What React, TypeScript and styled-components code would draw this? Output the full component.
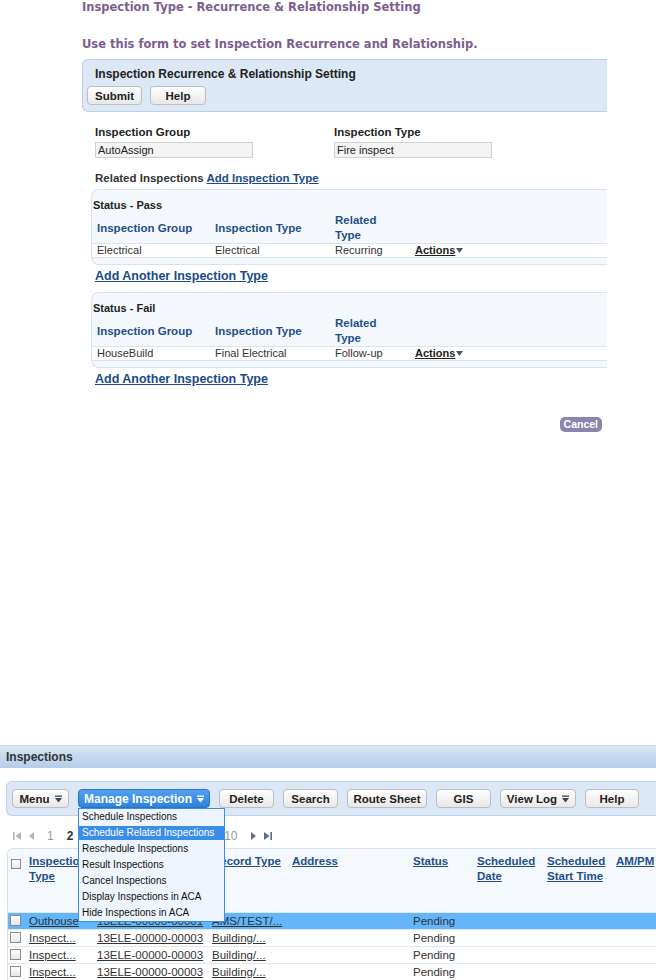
import styled, { createGlobalStyle } from 'styled-components'

const purple = '#7c5e8e'
const linkBlue = '#1b4a86'
const headBlue = '#1f4f88'

interface Relation {
  group: string
  type: string
  related: string
}

interface Inspection {
  type: string
  record: string
  recordType: string
  status: string
  selected?: boolean
}

const passRelations: Relation[] = [{ group: 'Electrical', type: 'Electrical', related: 'Recurring' }]
const failRelations: Relation[] = [{ group: 'HouseBuild', type: 'Final Electrical', related: 'Follow-up' }]

const toolbarButtons = [
  { label: 'Menu', width: 57, drop: true },
  { label: 'Manage Inspection', width: 132, drop: true, primary: true },
  { label: 'Delete', width: 55 },
  { label: 'Search', width: 55 },
  { label: 'Route Sheet', width: 80 },
  { label: 'GIS', width: 55 },
  { label: 'View Log', width: 76, drop: true },
  { label: 'Help', width: 54 }
]

const manageItems = [
  'Schedule Inspections',
  'Schedule Related Inspections',
  'Reschedule Inspections',
  'Result Inspections',
  'Cancel Inspections',
  'Display Inspections in ACA',
  'Hide Inspections in ACA'
]

const columns = [
  { label: '', width: 20 },
  { label: 'Inspection Type', width: 68 },
  { label: 'Record ID', width: 115 },
  { label: 'Record Type', width: 80 },
  { label: 'Address', width: 121 },
  { label: 'Status', width: 64 },
  { label: 'Scheduled Date', width: 70 },
  { label: 'Scheduled Start Time', width: 69 },
  { label: 'AM/PM' }
]

const inspections: Inspection[] = [
  { type: 'Outhouse', record: '13ELE-00000-00001', recordType: 'AMS/TEST/...', status: 'Pending', selected: true },
  { type: 'Inspect...', record: '13ELE-00000-00003', recordType: 'Building/...', status: 'Pending' },
  { type: 'Inspect...', record: '13ELE-00000-00003', recordType: 'Building/...', status: 'Pending' },
  { type: 'Inspect...', record: '13ELE-00000-00003', recordType: 'Building/...', status: 'Pending' }
]

const GlobalStyle = createGlobalStyle`
  body {
    margin: 0;
    background: #fff;
    color: #222;
    font-family: 'Liberation Sans', Arial, sans-serif;
  }
`

const DropIcon = ({ color = '#444' }: { color?: string }) => (
  <svg width="7" height="8" viewBox="0 0 7 8">
    <rect x="0" y="0.5" width="7" height="1.3" fill={color} />
    <polygon points="0,3 7,3 3.5,7.5" fill={color} />
  </svg>
)

const PagerArrow = ({ dir, end, color }: { dir: 'left' | 'right'; end?: boolean; color: string }) => (
  <svg width={end ? 8 : 5} height="8" viewBox={end ? '0 0 8 8' : '0 0 5 8'}>
    {dir === 'left' && end && (
      <>
        <rect x="0" y="0" width="1.6" height="8" fill={color} />
        <polygon points="8,0 8,8 2.5,4" fill={color} />
      </>
    )}
    {dir === 'left' && !end && <polygon points="5,0 5,8 0,4" fill={color} />}
    {dir === 'right' && !end && <polygon points="0,0 0,8 5,4" fill={color} />}
    {dir === 'right' && end && (
      <>
        <polygon points="0,0 0,8 5.5,4" fill={color} />
        <rect x="6.4" y="0" width="1.6" height="8" fill={color} />
      </>
    )}
  </svg>
)

const StatusSection = ({ status, rows }: { status: string; rows: Relation[] }) => (
  <StatusBox>
    <StatusTitle>Status - {status}</StatusTitle>
    <RelTable>
      <colgroup>
        <col style={{ width: 118 }} />
        <col style={{ width: 120 }} />
        <col style={{ width: 80 }} />
        <col />
      </colgroup>
      <thead>
        <tr>
          <RelHead>Inspection Group</RelHead>
          <RelHead>Inspection Type</RelHead>
          <RelHead>
            Related
            <br />
            Type
          </RelHead>
          <RelHead />
        </tr>
      </thead>
      <tbody>
        {rows.map((row) => (
          <tr key={row.group}>
            <RelCell>{row.group}</RelCell>
            <RelCell>{row.type}</RelCell>
            <RelCell>{row.related}</RelCell>
            <RelCell>
              <ActionsLink>
                <span>Actions</span>
                <svg width="7" height="5" viewBox="0 0 7 5">
                  <polygon points="0,0 7,0 3.5,5" fill="#555" />
                </svg>
              </ActionsLink>
            </RelCell>
          </tr>
        ))}
      </tbody>
    </RelTable>
  </StatusBox>
)

const App = () => (
  <>
    <GlobalStyle />
    <FormArea>
      <PageTitle>Inspection Type - Recurrence &amp; Relationship Setting</PageTitle>
      <Intro>Use this form to set Inspection Recurrence and Relationship.</Intro>
      <SettingPanel>
        <PanelTitle>Inspection Recurrence &amp; Relationship Setting</PanelTitle>
        <ButtonRow>
          <GrayButton $w={55}>Submit</GrayButton>
          <GrayButton $w={56}>Help</GrayButton>
        </ButtonRow>
      </SettingPanel>
      <FieldGrid>
        <Field>
          <FieldLabel>Inspection Group</FieldLabel>
          <FieldInput readOnly value="AutoAssign" />
        </Field>
        <Field>
          <FieldLabel>Inspection Type</FieldLabel>
          <FieldInput readOnly value="Fire inspect" />
        </Field>
      </FieldGrid>
      <RelatedLine>
        Related Inspections <InlineLink>Add Inspection Type</InlineLink>
      </RelatedLine>
      <StatusSection status="Pass" rows={passRelations} />
      <AddLink>Add Another Inspection Type</AddLink>
      <StatusSection status="Fail" rows={failRelations} />
      <AddLink>Add Another Inspection Type</AddLink>
      <CancelRow>
        <CancelButton>Cancel</CancelButton>
      </CancelRow>
    </FormArea>

    <Portlet>
      <PortletHeader>Inspections</PortletHeader>
      <Toolbar>
        {toolbarButtons.map((b) => (
          <ButtonSlot key={b.label}>
            <GrayButton $w={b.width} $primary={b.primary}>
              {b.label}
              {b.drop && <DropIcon color={b.primary ? '#fff' : '#444'} />}
            </GrayButton>
            {b.primary && (
              <DropMenu>
                {manageItems.map((item, i) => (
                  <MenuItem key={item} $active={i === 1}>
                    {item}
                  </MenuItem>
                ))}
              </DropMenu>
            )}
          </ButtonSlot>
        ))}
      </Toolbar>
      <Pager>
        <ArrowPair>
          <PagerArrow dir="left" end color="#b4b4b4" />
          <PagerArrow dir="left" color="#b4b4b4" />
        </ArrowPair>
        {Array.from({ length: 10 }, (_, i) => (
          <PageNum key={i} $current={i === 1}>
            {i + 1}
          </PageNum>
        ))}
        <ArrowPair>
          <PagerArrow dir="right" color="#5f6f80" />
          <PagerArrow dir="right" end color="#5f6f80" />
        </ArrowPair>
      </Pager>
      <GridWrap>
        <InspTable>
          <colgroup>
            {columns.map((c, i) => (
              <col key={i} style={c.width ? { width: c.width } : undefined} />
            ))}
          </colgroup>
          <thead>
            <tr>
              {columns.map((c, i) => (
                <GridHead key={i}>{i === 0 ? <CheckBox $header /> : <HeadLink>{c.label}</HeadLink>}</GridHead>
              ))}
            </tr>
          </thead>
          <tbody>
            {inspections.map((r, i) => (
              <GridRow key={i} $selected={r.selected}>
                <GridCell>
                  <CheckBox />
                </GridCell>
                <GridCell>
                  <CellLink>{r.type}</CellLink>
                </GridCell>
                <GridCell>
                  <CellLink>{r.record}</CellLink>
                </GridCell>
                <GridCell>
                  <CellLink>{r.recordType}</CellLink>
                </GridCell>
                <GridCell />
                <GridCell>{r.status}</GridCell>
                <GridCell />
                <GridCell />
                <GridCell />
              </GridRow>
            ))}
          </tbody>
        </InspTable>
      </GridWrap>
    </Portlet>
  </>
)

export default App

const FormArea = styled.div`
  width: 525px;
  margin-left: 82px;
`

const PageTitle = styled.div`
  font-family: 'DejaVu Sans', sans-serif;
  font-weight: bold;
  font-size: 11.5px;
  line-height: 15px;
  color: ${purple};
  white-space: nowrap;
`

const Intro = styled(PageTitle)`
  margin-top: 22px;
  line-height: 14px;
`

const SettingPanel = styled.div`
  margin-top: 8px;
  padding: 7px 0 6px 4px;
  background: #dce8f5;
  border: 1px solid #bbd0e8;
  border-right: none;
  border-radius: 6px 0 0 6px;
`

const PanelTitle = styled.div`
  padding-left: 8px;
  font-size: 12px;
  font-weight: bold;
  line-height: 14px;
  color: #222;
`

const ButtonRow = styled.div`
  display: flex;
  gap: 8px;
  margin-top: 5px;
`

const GrayButton = styled.div<{ $w: number; $primary?: boolean }>`
  box-sizing: border-box;
  width: ${({ $w }) => $w}px;
  height: 19px;
  display: flex;
  align-items: center;
  justify-content: center;
  gap: 5px;
  border-radius: 4px;
  font-size: ${({ $primary }) => ($primary ? 12 : 11.5)}px;
  font-weight: bold;
  white-space: nowrap;
  color: ${({ $primary }) => ($primary ? '#fff' : '#222')};
  border: 1px solid ${({ $primary }) => ($primary ? '#2b73c4' : '#bdbdbd')};
  background: ${({ $primary }) =>
    $primary ? 'linear-gradient(#52a0f0, #2f82dc)' : 'linear-gradient(#fefefe, #e8e8e8)'};
`

const FieldGrid = styled.div`
  display: grid;
  grid-template-columns: 239px 1fr;
  margin-top: 13px;
  padding-left: 13px;
`

const Field = styled.div`
  display: flex;
  flex-direction: column;
`

const FieldLabel = styled.div`
  font-size: 11.5px;
  font-weight: bold;
  line-height: 14px;
  color: #222;
`

const FieldInput = styled.input`
  box-sizing: border-box;
  width: 158px;
  height: 16px;
  margin: 3px 0 0;
  padding: 0 2px;
  border: 1px solid #d0d0d0;
  background: #f3f3f3;
  font-family: 'Liberation Sans', Arial, sans-serif;
  font-size: 11px;
  color: #222;
  outline: none;
`

const RelatedLine = styled.div`
  margin-top: 13px;
  padding-left: 13px;
  font-size: 11.5px;
  font-weight: bold;
  line-height: 14px;
  color: #333;
`

const InlineLink = styled.span`
  color: ${linkBlue};
  text-decoration: underline;
`

const StatusBox = styled.div`
  margin: 4px 0 0 9px;
  padding-bottom: 6px;
  background: #f4f8fc;
  border: 1px solid #d6e3f1;
  border-right: none;
  border-radius: 8px 0 0 8px;
`

const StatusTitle = styled.div`
  margin-top: 8px;
  padding-left: 1px;
  font-size: 11px;
  font-weight: bold;
  line-height: 14px;
  color: #222;
`

const RelTable = styled.table`
  width: 100%;
  table-layout: fixed;
  border-collapse: collapse;
`

const RelHead = styled.th`
  padding: 1px 5px 0;
  text-align: left;
  vertical-align: middle;
  font-size: 11.5px;
  font-weight: bold;
  line-height: 15px;
  color: ${headBlue};
`

const RelCell = styled.td`
  padding: 0 5px;
  background: #fff;
  border-top: 1px solid #d9e4ef;
  border-bottom: 1px solid #d9e4ef;
  font-size: 11px;
  line-height: 13px;
  color: #333;
  white-space: nowrap;
`

const ActionsLink = styled.span`
  display: inline-flex;
  align-items: center;
  gap: 1px;
  font-weight: bold;
  color: #222;

  span {
    text-decoration: underline;
  }
`

const AddLink = styled.div`
  margin-top: 4px;
  padding-left: 13px;
  font-size: 12.5px;
  font-weight: bold;
  line-height: 14px;
  color: ${linkBlue};
  text-decoration: underline;

  & + ${StatusBox} {
    margin-top: 9px;
  }
`

const CancelRow = styled.div`
  display: flex;
  justify-content: flex-end;
  margin-top: 31px;
  padding-right: 5px;
`

const CancelButton = styled.div`
  height: 15px;
  padding: 0 4px;
  border-radius: 5px;
  background: #8b84ad;
  color: #fff;
  font-size: 10.5px;
  font-weight: bold;
  line-height: 15px;
`

const Portlet = styled.div`
  margin-top: 313px;
`

const PortletHeader = styled.div`
  height: 22px;
  padding-left: 6px;
  background: linear-gradient(#dae6f4, #c5d8ee 50%, #b5cdea);
  border-top: 1px solid #c9d9ec;
  font-size: 12px;
  font-weight: bold;
  line-height: 22px;
  color: #333;
`

const Toolbar = styled.div`
  display: flex;
  gap: 9px;
  height: 35px;
  box-sizing: border-box;
  margin: 13px 0 0 6px;
  padding: 7px 0 0 5px;
  background: #dce8f5;
  border: 1px solid #bcd2ea;
  border-right: none;
  border-radius: 6px 0 0 6px;
`

const ButtonSlot = styled.div`
  position: relative;
`

const DropMenu = styled.div`
  position: absolute;
  top: 19px;
  left: 0;
  z-index: 5;
  display: flex;
  flex-direction: column;
  width: 147px;
  box-sizing: border-box;
  background: #eef5fd;
  border: 1px solid #3b8de6;
`

const MenuItem = styled.div<{ $active?: boolean }>`
  height: 14px;
  margin: 1px 0;
  padding-left: 3px;
  font-size: 10px;
  line-height: 14px;
  white-space: nowrap;
  color: ${({ $active }) => ($active ? '#fff' : '#111')};
  background: ${({ $active }) => ($active ? '#3b8ee8' : 'transparent')};
`

const Pager = styled.div`
  display: flex;
  align-items: center;
  gap: 13px;
  height: 14px;
  margin-top: 13px;
  padding-left: 13px;
`

const ArrowPair = styled.div`
  display: flex;
  align-items: center;
  gap: 8px;
`

const PageNum = styled.span<{ $current?: boolean }>`
  font-size: 12px;
  line-height: 14px;
  font-weight: ${({ $current }) => ($current ? 'bold' : 'normal')};
  color: ${({ $current }) => ($current ? '#333' : '#999')};
`

const GridWrap = styled.div`
  margin: 5px 0 0 7px;
  background: #f5f9fd;
  border-top: 1px solid #d3e1f0;
  border-left: 1px solid #d3e1f0;
  border-radius: 6px 0 0 0;
  overflow: hidden;
`

const InspTable = styled.table`
  width: 100%;
  table-layout: fixed;
  border-collapse: collapse;
`

const GridHead = styled.th`
  height: 63px;
  box-sizing: border-box;
  padding: 5px 0 0 1px;
  text-align: left;
  vertical-align: top;
  font-size: 11.5px;
  font-weight: bold;
  line-height: 15px;

  &:first-child {
    padding: 10px 0 0 3px;
  }
`

const HeadLink = styled.span`
  color: ${headBlue};
  text-decoration: underline;
`

const CheckBox = styled.span<{ $header?: boolean }>`
  display: block;
  box-sizing: border-box;
  width: ${({ $header }) => ($header ? 10 : 11)}px;
  height: ${({ $header }) => ($header ? 10 : 11)}px;
  border: 1px solid #8c8c8c;
  background: linear-gradient(#ffffff, #e6e6e6);
`

const GridRow = styled.tr<{ $selected?: boolean }>`
  background: ${({ $selected }) => ($selected ? '#62b6f9' : '#fff')};
  border-top: 1px solid #dfe7f0;
`

const GridCell = styled.td`
  height: 16px;
  padding: 0 0 0 1px;
  font-size: 11.5px;
  line-height: 16px;
  color: #333;
  white-space: nowrap;
  overflow: hidden;

  &:first-child {
    padding-left: 2px;
  }
`

const CellLink = styled.span`
  text-decoration: underline;
`
